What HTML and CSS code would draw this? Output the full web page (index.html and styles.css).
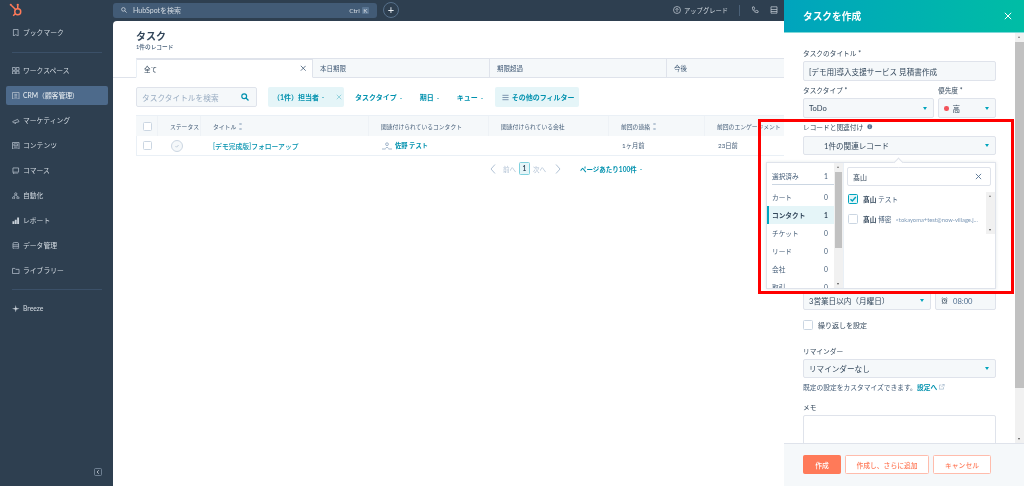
FILE: index.html
```html
<!DOCTYPE html>
<html lang="ja">
<head>
<meta charset="utf-8">
<title>タスク</title>
<link rel="stylesheet" href="styles.css">
</head>
<body>
<div class="app">
  <aside class="sidebar">
    <div class="logo">
      <svg viewBox="0 0 16 16" width="14" height="14"><g fill="none" stroke="#ff7a59" stroke-width="1.7"><circle cx="10" cy="10" r="3.4"/><path d="M10 6.5V3M2.5 2.5l5 5M6.8 12.5l-2 2"/></g><circle cx="10" cy="2.2" r="1.3" fill="#ff7a59"/><circle cx="2" cy="2" r="1.2" fill="#ff7a59"/></svg>
    </div>
    <a class="nav-item"><svg class="nav-icon" viewBox="0 0 8 8"><path d="M1.5.5h5v7L4 6 1.5 7.500z"/></svg>ブックマーク</a>
    <div class="nav-divider first"></div>
    <a class="nav-item"><svg class="nav-icon" viewBox="0 0 8 8"><path d="M.5.5h3v3h-3zM4.500.5h3v3h-3zM.5 4.500h3v3h-3zM4.500 4.500h3v3h-3z"/></svg>ワークスペース</a>
    <a class="nav-item active"><span class="nav-pill"><svg class="nav-icon" viewBox="0 0 8 8"><path d="M.5.5h7v7h-7zM2.500 2.500h3M2.500 4h3M2.500 5.500h3"/></svg>CRM（顧客管理）</span></a>
    <a class="nav-item"><svg class="nav-icon" viewBox="0 0 8 8"><path d="M.5 5 6 2.500 7.500 5 2 6.500zM3 6l1 1.500"/></svg>マーケティング</a>
    <a class="nav-item"><svg class="nav-icon" viewBox="0 0 8 8"><path d="M.5.5h7v7h-7zM2 2h4v2H2zM2 5.500h4"/></svg>コンテンツ</a>
    <a class="nav-item"><svg class="nav-icon" viewBox="0 0 8 8"><path d="M1 1h6v4.500H1zM1 5.500 2 7.500h4.500"/></svg>コマース</a>
    <a class="nav-item"><svg class="nav-icon" viewBox="0 0 8 8"><circle cx="4" cy="2" r="1.200"/><circle cx="1.700" cy="6.300" r="1.200"/><circle cx="6.300" cy="6.300" r="1.200"/><path d="M3.500 3 2.200 5.200M4.500 3l1.300 2.200"/></svg>自動化</a>
    <a class="nav-item"><svg class="nav-icon solid" viewBox="0 0 8 8"><path d="M.5 4.500h2v3h-2zM3 3h2v4.500H3zM5.500.5h2v7h-2z"/></svg>レポート</a>
    <a class="nav-item"><svg class="nav-icon" viewBox="0 0 8 8"><rect x="1" y=".5" width="6" height="7" rx="1.500"/><path d="M1 3h6M1 5h6"/></svg>データ管理</a>
    <a class="nav-item"><svg class="nav-icon" viewBox="0 0 8 8"><path d="M.5 1.500h2.500l1 1h3.500v4.500H.5z"/></svg>ライブラリー</a>
    <div class="nav-divider"></div>
    <a class="nav-item"><svg class="nav-icon solid" viewBox="0 0 8 8"><path d="M4 0l.7 3.300L8 4l-3.300.7L4 8l-.7-3.300L0 4l3.300-.7z"/></svg>Breeze</a>
    <div class="collapse">
      <svg viewBox="0 0 8 8" width="8" height="8"><rect x=".5" y=".5" width="7" height="7" rx="1" fill="none" stroke="#8a9bad" stroke-width=".7"/><path d="M4.800 2.300 3 4l1.800 1.700" fill="none" stroke="#cfd6dd" stroke-width=".8"/></svg>
    </div>
  </aside>

  <div class="column">
    <header class="topbar">
      <div class="global-search">
        <svg class="search-small" viewBox="0 0 8 8"><circle cx="3.200" cy="3.200" r="2.400"/><path d="M5 5l2.500 2.500"/></svg>
        <span class="search-text">HubSpotを検索</span>
        <span class="kbd">Ctrl</span><span class="kbd boxed">K</span>
      </div>
      <button class="plus">+</button>
      <div class="top-right">
        <svg class="top-icon" viewBox="0 0 8 8"><circle cx="4" cy="4" r="3.500"/><path d="M2.500 3.800 4 2.300l1.500 1.500M4 2.500V6"/></svg>
        <span class="upgrade">アップグレード</span>
        <span class="top-sep"></span>
        <svg class="top-icon phone" viewBox="0 0 8 8"><path d="M1.500 1 3 .8l.7 1.700-.9.7c.4.900 1.100 1.600 2 2l.7-.9 1.700.7L7 6.500C4 7.300.8 4 1.500 1z"/></svg>
        <svg class="top-icon store" viewBox="0 0 8 8"><path d="M1 .8h6v6.400H1zM1 3.500h6M1 5.500h6"/></svg>
      </div>
    </header>

    <main class="panel">
      <h1 class="title">タスク</h1>
      <p class="count">1件のレコード</p>
      <nav class="tabs">
        <div class="tab current">全て<svg class="tab-x" viewBox="0 0 8 8"><path d="M1 1l6 6M7 1 1 7"/></svg></div>
        <div class="tab">本日期限</div>
        <div class="tab">期限超過</div>
        <div class="tab">今後</div>
      </nav>
      <div class="filters">
        <div class="task-search">
          <span>タスクタイトルを検索</span>
          <svg class="search-teal" viewBox="0 0 8 8"><circle cx="3.200" cy="3.200" r="2.400"/><path d="M5 5l2.500 2.500"/></svg>
        </div>
        <div class="chip owner">（1件）担当者<i class="mini-caret"></i><svg class="chip-x" viewBox="0 0 8 8"><path d="M1 1l6 6M7 1 1 7"/></svg></div>
        <span class="filter type">タスクタイプ<i class="mini-caret"></i></span>
        <span class="filter due">期日<i class="mini-caret"></i></span>
        <span class="filter queue">キュー<i class="mini-caret"></i></span>
        <div class="chip more"><svg class="sliders" viewBox="0 0 8 8"><path d="M.5 1.500h7M.5 4h7M.5 6.500h7"/></svg>その他のフィルター</div>
      </div>
      <div class="table">
        <div class="tr thead">
          <div class="td check"><span class="box"></span></div>
          <div class="td status">ステータス</div>
          <div class="td ttl">タイトル<span class="sort"></span></div>
          <div class="td contact">関連付けられているコンタクト</div>
          <div class="td company">関連付けられている会社</div>
          <div class="td last">前回の連絡<span class="sort"></span></div>
          <div class="td engage">前回のエンゲージメント</div>
        </div>
        <div class="tr tbody">
          <div class="td check"><span class="box"></span></div>
          <div class="td status"><span class="circle"><svg viewBox="0 0 8 8"><path d="M2 4.200 3.400 5.600 6 2.800"/></svg></span></div>
          <div class="td ttl link">[デモ完成版]フォローアップ</div>
          <div class="td contact"><svg class="person" viewBox="0 0 10 8"><circle cx="5" cy="2.200" r="1.400"/><path d="M0 7h3.500M6.500 7H10M3.500 6.500c.5-1.500 2.500-1.500 3 0"/></svg><span class="link strong">佐野 テスト</span></div>
          <div class="td company"></div>
          <div class="td last">1ヶ月前</div>
          <div class="td engage">23日前</div>
        </div>
      </div>
      <div class="pager">
        <svg class="chev" viewBox="0 0 6 10"><path d="M5 .5 1 5l4 4.500"/></svg>
        <span class="pg-text prev">前へ</span>
        <span class="pg-num">1</span>
        <span class="pg-text next">次へ</span>
        <svg class="chev" viewBox="0 0 6 10"><path d="M1 .5 5 5 1 9.500"/></svg>
        <span class="per-page">ページあたり100件<i class="mini-caret"></i></span>
      </div>
    </main>
  </div>
</div>

<section class="drawer">
  <header class="drawer-head">
    <h2>タスクを作成</h2>
    <svg class="drawer-x" viewBox="0 0 8 8"><path d="M.8.8l6.400 6.400M7.200.8.8 7.200"/></svg>
  </header>
  <div class="drawer-scroll">
    <form class="form">
      <label class="label">タスクのタイトル *</label>
      <div class="control">[デモ用]導入支援サービス 見積書作成</div>
      <div class="row gap-top">
        <div class="grow">
          <label class="label">タスクタイプ *</label>
          <div class="control select">ToDo<i class="caret"></i></div>
        </div>
        <div class="priority">
          <label class="label">優先度 *</label>
          <div class="control select"><span><b class="dot"></b>高</span><i class="caret"></i></div>
        </div>
      </div>
      <label class="label gap-top assoc">レコードと関連付け<svg class="info" viewBox="0 0 8 8"><circle cx="4" cy="4" r="3.600"/><path d="M4 3.400v2.800M4 1.700v1"/></svg></label>
      <div class="control select short indent">1件の関連レコード<i class="caret"></i></div>
      <div class="row after-popover">
        <div class="grow"><div class="control select short">3営業日以内（月曜日）<i class="caret"></i></div></div>
        <div class="time"><div class="control short"><svg class="clock" viewBox="0 0 8 8"><circle cx="4" cy="4.500" r="2.600"/><path d="M4 3v1.500h1.200M.8 1.800 2 .8M7.200 1.800 6 .8M2 7 1.300 7.800M6 7l.7.800"/></svg>08:00</div></div>
      </div>
      <div class="repeat"><span class="box big"></span>繰り返しを設定</div>
      <label class="label remind">リマインダー</label>
      <div class="control select short">リマインダーなし<i class="caret"></i></div>
      <p class="help">既定の設定をカスタマイズできます。<a class="link strong">設定へ</a><svg class="ext" viewBox="0 0 8 8"><path d="M6.500 4.500v3H.5v-6h3M4.500.5h3v3M7.500.5 3.500 4.500"/></svg></p>
      <label class="label memo">メモ</label>
      <div class="textarea"></div>
    </form>
    <div class="scrollbar">
      <i class="arrow up"></i>
      <i class="thumb"></i>
      <i class="arrow down"></i>
    </div>
  </div>
  <footer class="drawer-foot">
    <button class="btn primary">作成</button>
    <button class="btn ghost add">作成し、さらに追加</button>
    <button class="btn ghost cancel">キャンセル</button>
  </footer>

  <div class="popover">
    <i class="pop-arrow"></i>
    <div class="pop-left">
      <div class="cat selected"><span>選択済み</span><span>1</span></div>
      <div class="cat"><span>カート</span><span>0</span></div>
      <div class="cat on"><span>コンタクト</span><span>1</span></div>
      <div class="cat"><span>チケット</span><span>0</span></div>
      <div class="cat"><span>リード</span><span>0</span></div>
      <div class="cat"><span>会社</span><span>0</span></div>
      <div class="cat"><span>取引</span><span>0</span></div>
    </div>
    <div class="pop-scroll"><i class="arrow up"></i><i class="pop-thumb"></i><i class="arrow down"></i></div>
    <div class="pop-right">
      <div class="pop-search">髙山<svg class="pop-x" viewBox="0 0 8 8"><path d="M1 1l6 6M7 1 1 7"/></svg></div>
      <div class="results">
        <div class="result-rows">
          <div class="result"><span class="box big checked"><svg viewBox="0 0 8 8"><path d="M1.500 4.200 3.300 6 6.800 2"/></svg></span><span><b>髙山</b> テスト</span></div>
          <div class="result"><span class="box big"></span><span><b>髙山</b> 博密</span><small>&lt;tokayoma+test@now-village.j...</small></div>
        </div>
        <div class="result-scroll"><i class="arrow up"></i><i class="arrow down"></i></div>
      </div>
    </div>
  </div>
</section>
<div class="highlight"></div>
</body>
</html>
```
FILE: styles.css
```css
* { box-sizing: border-box; }
html, body { margin: 0; height: 100%; overflow: hidden; }
html { background: #2e3f50; }
body { font-family: "Lato", "Noto Sans CJK JP", sans-serif; color: #33475b; background: #2e3f50; font-size: 7px; filter: blur(.3px); }
svg { display: block; flex: none; }
p, h1, h2 { margin: 0; }

.app { display: flex; width: 1024px; height: 486px; }

/* sidebar */
.sidebar { width: 113px; flex: none; background: #2e3f50; color: #d5dce3; display: flex; flex-direction: column; position: relative; }
.logo { height: 20px; padding: 3px 0 0 9px; }
.nav-item { height: 25px; display: flex; align-items: center; padding-left: 12px; font-size: 6.800px; line-height: 1; flex: none; }
.nav-icon { width: 7.500px; height: 7.500px; margin-right: 3.500px; fill: none; stroke: #b7c2cd; stroke-width: .8; }
.nav-icon.solid { fill: #c8d0d8; stroke: none; }
.nav-item.active { padding-left: 6px; }
.nav-pill { width: 102px; height: 19px; display: flex; align-items: center; padding-left: 6px; background: #4d6a8b; border-radius: 2px; color: #eef2f5; }
.nav-divider { height: 1px; margin: 6px 11px 6px 12px; background: #3b5068; flex: none; }
.nav-divider.first { margin: 7px 11px 5px 12px; }
.collapse { position: absolute; left: 94px; top: 468px; }

/* top bar */
.column { flex: 1; display: flex; flex-direction: column; min-width: 0; }
.topbar { height: 21px; flex: none; display: flex; align-items: center; color: #d5dce3; padding-bottom: 1px; }
.global-search { width: 264px; height: 15px; background: #425b76; border-radius: 3px; display: flex; align-items: center; padding: 0 8px; font-size: 7px; }
.search-small { width: 6px; height: 6px; margin-right: 6px; fill: none; stroke: #d5dce3; stroke-width: 1; }
.search-text { flex: 1; }
.kbd { font-size: 6.500px; margin-left: 2px; }
.kbd.boxed { background: #5a7592; padding: 0 1.500px; border-radius: 1px; }
.plus { width: 16px; height: 16px; margin-left: 6px; border: 1px solid #56708b; border-radius: 50%; background: transparent; color: #e8edf1; font: 11px/12px "Lato", sans-serif; padding: 0; }
.top-right { display: flex; align-items: center; margin-left: 274px; }
.top-icon { width: 8px; height: 8px; fill: none; stroke: #c8d0d8; stroke-width: .7; }
.upgrade { margin-left: 3px; font-size: 6.300px; white-space: nowrap; }
.top-sep { width: 1px; height: 11px; background: #4b6178; margin: 0 11px; }
.phone { margin-right: 11px; }

/* main panel */
.panel { flex: 1; background: #fff; border-top-left-radius: 4px; padding: 10px 0 0 23px; overflow: hidden; min-height: 0; }
.title { font-size: 10px; line-height: 11px; font-weight: 700; color: #33475b; }
.count { font-size: 5.700px; line-height: 8px; margin-top: 1px; font-weight: 500; color: #425b76; }
.tabs { display: flex; margin-top: 7px; margin-left: -23px; padding-left: 23px; height: 20px; border-bottom: 1px solid #dfe3eb; }
.tab { width: 177px; height: 20px; flex: none; background: #f5f8fa; border: 1px solid #dfe3eb; border-left: 0; padding: 0 0 0 7px; display: flex; align-items: center; font-size: 6.500px; color: #425b76; }
.tab.current { background: #fff; border-left: 1px solid #eaf0f6; border-top-width: 2px; border-bottom-color: #fff; justify-content: space-between; padding-right: 6px; color: #33475b; }
.tab-x { width: 6.500px; height: 6.500px; fill: none; stroke: #425b76; stroke-width: 1; }

.filters { display: flex; align-items: center; margin-top: 9px; height: 20px; color: #0091ae; font-size: 7px; font-weight: 700; }
.task-search { width: 121px; height: 20px; background: #f5f8fa; border: 1px solid #dfe3eb; border-radius: 2px; display: flex; align-items: center; justify-content: space-between; padding: 0 7px 0 5px; font-size: 7.700px; font-weight: 400; color: #99acc2; white-space: nowrap; }
.search-teal { width: 8px; height: 8px; fill: none; stroke: #0091ae; stroke-width: 1.200; }
.chip { height: 20px; background: #e5f5f8; border-radius: 2px; display: flex; align-items: center; white-space: nowrap; }
.owner { width: 76px; margin-left: 11px; padding-left: 5px; position: relative; }
.chip-x { position: absolute; right: 2px; top: 7px; width: 6px; height: 6px; fill: none; stroke: #7fc8d6; stroke-width: 1; }
.filter { white-space: nowrap; }
.type { margin-left: 11px; }
.due { margin-left: 18px; }
.queue { margin-left: 18px; }
.more { width: 84px; margin-left: 12px; padding-left: 7px; }
.sliders { width: 7px; height: 7px; margin-right: 3px; fill: none; stroke: #516f90; stroke-width: .8; }
.mini-caret { display: inline-block; width: 0; height: 0; margin-left: 3px; vertical-align: middle; border: 1.300px solid transparent; border-top: 1.600px solid #0091ae; border-bottom: 0; }

.table { margin-top: 8px; width: 900px; }
.tr { display: grid; grid-template-columns: 22px 43px 168px 120px 120px 96px 331px; }
.thead { height: 21px; background: #f5f8fa; font-size: 5.800px; color: #425b76; border-top: 1px solid #eaf0f6; }
.tbody { height: 20px; border-bottom: 1px solid #eaf0f6; border-left: 1px solid #eaf0f6; font-size: 6.300px; color: #425b76; }
.td { display: flex; align-items: center; padding-left: 12px; white-space: nowrap; border-right: 1px solid #eef2f6; }
.tbody .td { border-right: 0; }
.td.check { padding-left: 7px; }
.tbody .td.check { padding-left: 6px; }
.box { width: 9px; height: 9px; background: #fff; border: 1px solid #cbd6e2; border-radius: 1.500px; display: block; flex: none; }
.box.big { width: 10px; height: 10px; }
.circle { width: 12px; height: 12px; border: 1px solid #cbd6e2; border-radius: 50%; background: #f5f8fa; margin-left: 0; display: flex; align-items: center; justify-content: center; }
.circle svg { width: 6px; height: 6px; fill: none; stroke: #99acc2; stroke-width: .8; }
.link { color: #0091ae; }
.strong { font-weight: 700; }
.ttl.link { font-size: 6.800px; font-weight: 500; padding-left: 11px; }
.person { width: 10px; height: 8px; margin-right: 3px; fill: none; stroke: #7c98b6; stroke-width: .7; }
.sort { width: 3px; height: 7px; margin-left: 3px; border-top: 2px solid #b8c6d5; border-bottom: 2px solid #b8c6d5; transform: scaleX(.8); }

.pager { display: flex; align-items: center; margin: 6px 0 0 354px; height: 13px; font-size: 6.500px; }
.chev { width: 6px; height: 10px; fill: none; stroke: #b0c1d4; stroke-width: 1; }
.pg-text { color: #b0c1d4; }
.prev { margin: 0 3px 0 7px; }
.next { margin: 0 9px 0 3px; }
.pg-num { width: 11px; height: 13px; border: 1px solid #7fd1de; background: #e5f5f8; border-radius: 1.500px; display: flex; align-items: center; justify-content: center; color: #33475b; font-weight: 700; }
.per-page { color: #0091ae; font-weight: 700; margin-left: 19px; white-space: nowrap; }

/* drawer */
.drawer { position: absolute; left: 784px; top: 0; width: 240px; height: 486px; background: #fff; display: flex; flex-direction: column; }
.drawer-head { height: 33px; flex: none; background: linear-gradient(90deg, #00a4bd, #00bda5); border-bottom: 1px solid #7fd8d8; display: flex; align-items: center; justify-content: space-between; padding: 0 12px 0 19px; color: #fff; }
.drawer-head h2 { font-size: 9.700px; font-weight: 700; }
.drawer-x { width: 8px; height: 8px; fill: none; stroke: #fff; stroke-width: 1; }
.drawer-scroll { flex: 1; display: flex; min-height: 0; overflow: hidden; }
.form { width: 231px; flex: none; padding: 16px 19px 0 19px; }
.label { display: block; height: 8px; line-height: 8px; margin-bottom: 4px; font-size: 6.700px; color: #33475b; white-space: nowrap; }
.control { height: 20px; background: #f5f8fa; border: 1px solid #dfe3eb; border-radius: 2px; padding: 0 5px; display: flex; align-items: center; font-size: 7.600px; color: #33475b; white-space: nowrap; }
.select { justify-content: space-between; }
.short { height: 19px; }
.indent { padding-left: 20px; }
.caret { width: 0; height: 0; border: 2.700px solid transparent; border-top: 3px solid #00a4bd; border-bottom: 0; margin-right: 1px; flex: none; }
.row { display: flex; gap: 4px; }
.grow { flex: 1; min-width: 0; }
.priority { width: 58px; }
.time { width: 61px; }
.gap-top { margin-top: 5px; }
.assoc { display: flex; align-items: center; margin-bottom: 5px; }
.info { width: 5.500px; height: 5.500px; margin-left: 4px; fill: #516f90; stroke: #fff; stroke-width: 0; }
.info path { stroke: #fff; stroke-width: .9; }
.after-popover { margin-top: 136px; }
.dot { display: inline-block; width: 4.500px; height: 4.500px; background: #f2545b; border-radius: 50%; margin: 0 4px 0 0; vertical-align: 1px; }
.clock { width: 7px; height: 7px; margin-right: 5px; fill: none; stroke: #33475b; stroke-width: .9; }
.time .control { color: #516f90; }
.repeat { display: flex; align-items: center; margin-top: 10px; height: 10px; gap: 5px; font-size: 7px; }
.remind { margin-top: 17px; }
.help { margin-top: 5px; height: 8px; line-height: 8px; font-size: 6.750px; color: #425b76; display: flex; align-items: center; white-space: nowrap; }
.ext { width: 5.500px; height: 5.500px; margin-left: 2px; fill: none; stroke: #7c98b6; stroke-width: .7; }
.memo { margin-top: 12px; }
.textarea { height: 60px; border: 1px solid #dfe3eb; border-radius: 2px; background: #fff; }
.scrollbar { width: 9px; flex: none; background: #f1f1f1; display: flex; flex-direction: column; align-items: center; position: relative; padding-top: 9px; }
.thumb { width: 9px; height: 346px; background: #c1c1c1; display: block; }
.arrow { display: block; width: 0; height: 0; border: 1.700px solid transparent; position: absolute; left: 50%; margin-left: -1.700px; }
.arrow.up { top: 3px; border-top: 0; border-bottom: 2.200px solid #777; }
.arrow.down { bottom: 3px; border-bottom: 0; border-top: 2.200px solid #505050; }
.drawer-foot { height: 43px; flex: none; background: #f5f8fa; border-top: 1px solid #dfe3eb; padding: 11px 0 0 19px; display: flex; gap: 4px; align-items: flex-start; }
.btn { height: 19px; border-radius: 1.500px; font: 500 6.800px "Lato", "Noto Sans CJK JP", sans-serif; padding: 0; white-space: nowrap; }
.primary { width: 38px; background: #ff7a59; border: 1px solid #ff7a59; color: #fff; }
.ghost { background: #fff; border: 1px solid #ffbcac; color: #ff7a59; }
.add { width: 84px; }
.cancel { width: 58px; }

/* popover */
.popover { position: absolute; left: -18px; top: 162px; width: 230px; height: 127px; background: #fff; border: 1px solid #dfe3eb; display: flex; box-shadow: 0 0 3px rgba(45, 62, 80, .12); }
.pop-arrow { position: absolute; left: 128px; top: -4px; width: 7px; height: 7px; background: #fff; border: 1px solid #dfe3eb; border-right: 0; border-bottom: 0; transform: rotate(45deg); }
.pop-left { width: 67px; flex: none; overflow: hidden; padding: 4px 0 0 0; }
.cat { height: 18px; display: flex; align-items: center; justify-content: space-between; padding: 0 6px 0 5px; font-size: 6.700px; color: #425b76; }
.cat.selected { margin: 0 0 3px 5px; padding: 0 6px 0 0; border-bottom: 1px solid #cbd6e2; }
.cat.on { background: #e5f5f8; border-left: 2px solid #00a4bd; padding-left: 3px; font-weight: 700; color: #33475b; }
.pop-scroll { width: 9px; flex: none; background: #f1f1f1; position: relative; padding-top: 9px; }
.pop-thumb { display: block; width: 7px; height: 76px; margin: 0 auto; background: #c1c1c1; }
.pop-right { flex: 1; min-width: 0; padding: 4px 4px 0 3px; border-left: 1px solid #eaf0f6; }
.pop-search { height: 19px; border: 1px solid #dfe3eb; border-radius: 2px; display: flex; align-items: center; justify-content: space-between; padding: 0 8px 0 5px; font-size: 7px; color: #33475b; }
.pop-x { width: 7px; height: 7px; fill: none; stroke: #516f90; stroke-width: 1; }
.results { display: flex; margin: 6px -4px 0 -3px; height: 42px; }
.result-rows { flex: 1; min-width: 0; padding-left: 4px; display: flex; flex-direction: column; gap: 6px; }
.result { height: 14px; display: flex; align-items: center; gap: 5px; font-size: 6.700px; color: #425b76; white-space: nowrap; }
.result b { font-weight: 700; color: #33475b; }
.result small { font-size: 5.800px; color: #7c98b6; margin-left: -1px; overflow: hidden; }
.checked { border-color: #00a4bd; background: #e5f5f8; display: flex; align-items: center; justify-content: center; }
.checked svg { width: 8px; height: 8px; fill: none; stroke: #00a4bd; stroke-width: 1.400; }
.result-scroll { width: 9px; flex: none; background: #f1f1f1; position: relative; }

.highlight { position: absolute; left: 758px; top: 119px; width: 256px; height: 175px; border: 3px solid #f00; }
```
